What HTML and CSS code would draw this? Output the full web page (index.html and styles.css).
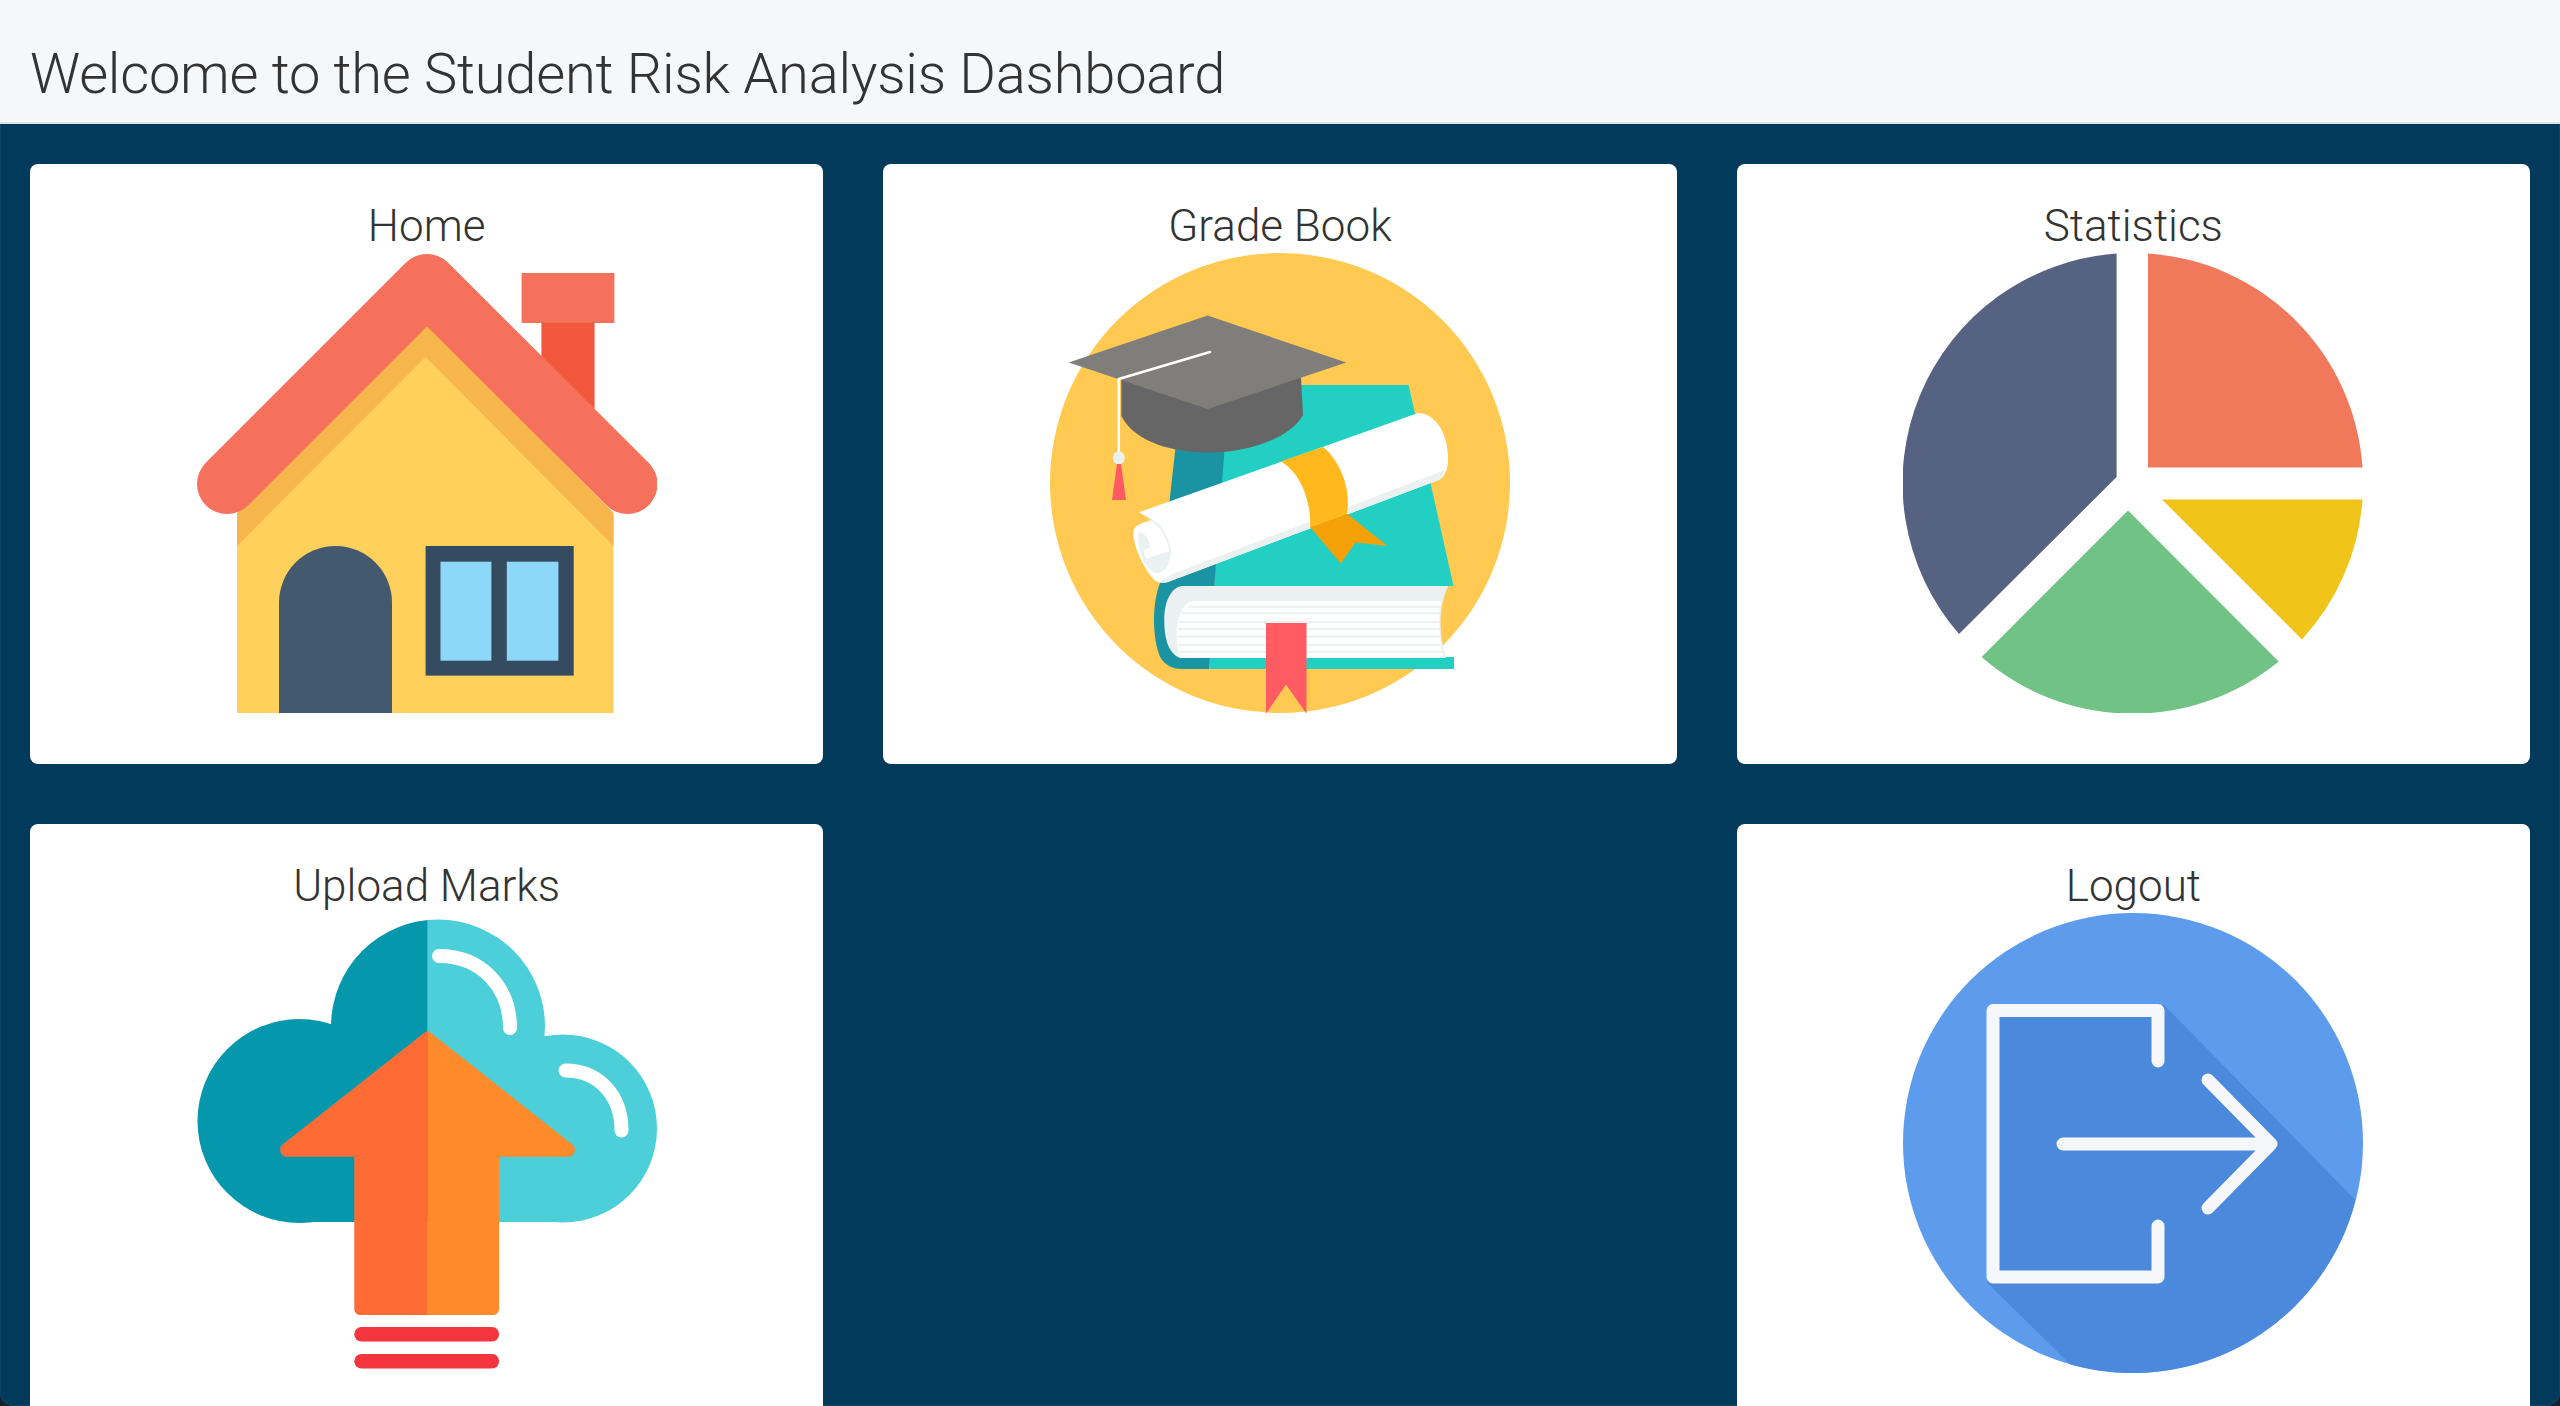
FILE: index.html
```html
<!DOCTYPE html>
<html lang="en">
<head>
<meta charset="utf-8">
<title>Student Risk Analysis Dashboard</title>
<link rel="stylesheet" href="styles.css">
</head>
<body>
<header class="topbar"><h1 class="topbar-title">Welcome to the Student Risk Analysis Dashboard</h1></header>
<main class="board">
  <a class="tile">
    <h2 class="tile-title">Home</h2>
    <svg class="tile-icon" viewBox="0 0 460 460">
      <rect x="344.400" y="60" width="53.200" height="130" fill="#f1583e"/>
      <rect x="324.600" y="20" width="92.800" height="50" fill="#f6715c"/>
      <polygon points="40,461 40,260 230,72 416.500,260 416.500,461" fill="#ffd05b"/>
      <polygon points="40,293 228.600,104 416.500,293 416.500,260 230,72 40,260" fill="#f7b64c"/>
      <polyline points="30,231 230,31 430.500,231" fill="none" stroke="#f6715c" stroke-width="60" stroke-linecap="round" stroke-linejoin="round"/>
      <path d="M82 461V349.500a56.500 56.500 0 0 1 113 0V461Z" fill="#435a6e"/>
      <rect x="228.600" y="293" width="148.100" height="129.600" fill="#344b60"/>
      <rect x="243.500" y="308.700" width="50.900" height="99" fill="#8dd7f9"/>
      <rect x="309.800" y="308.700" width="51.600" height="99" fill="#8dd7f9"/>
    </svg>
  </a>
  <a class="tile">
    <h2 class="tile-title">Grade Book</h2>
    <svg class="tile-icon" viewBox="0 0 460 460">
      <circle cx="230" cy="230" r="230" fill="#ffc952"/>
      <polygon points="240,132 358.600,132 403.500,333 164.300,333 172,190" fill="#21d0c3"/>
      <polygon points="126,190 175,190 164.300,333 110,333" fill="#1a93a2"/>
      <path d="M110 330C102 350 102 385 110 403.700C115 412 122 416 131.700 416H159.300L164.300 333V300Z" fill="#1a93a2"/>
      <rect x="160" y="404" width="244" height="12" fill="#21d0c3"/>
      <path d="M131.700 333H398.400C390 350 387 375 396 405H130C118 400 114.300 385 114.300 367C114.300 350 120 335 131.700 333Z" fill="#ebf0f1"/>
      <path d="M141.700 348H391C388 365 389 385 394 404.500H130C127 395 126.700 390 126.700 380C126.700 365 133 350 141.700 348Z" fill="#fff"/>
      <path d="M138 353.700H391M131.700 360.300H390M128.500 368.700H390M127 376H390M127 383.700H391M127.500 392H393M129 398.700H395" stroke="#ebf0f1" stroke-width="2"/>
      <path d="M216 370H256.500V460.700L236 431.400L216 460.700Z" fill="#ff5b62"/>
      <path d="M89 259.300L368 160C385 160 398 180 398 205C398 215 396 222 390 226.500L118 329C114 330 110 330 106.700 328.700C97 322 83.300 295 83.300 280C83.300 272 92 270 101.700 267Z" fill="#fff"/>
      <path d="M394.800 217C394 221 392 225 390 226.500L118 329C114 330 112 329.500 110 329C113 327 116 324 120 322Z" fill="#ebf0f1"/>
      <path d="M88.300 283C88 279 92 278 94 281C98 285 100 290 100 295L94 297C94 301 95 304 97 305.500L120 298C121 308 118 318 107 320C97 320 87 298 88.300 283Z" fill="#ebf0f1"/>
      <path d="M101 267C112 272 120 288 120.500 302" fill="none" stroke="#ebf0f1" stroke-width="2"/>
      <path d="M296.800 260.600L337.600 293L305.500 289.500L290.700 310.400L260 274Z" fill="#f4a107"/>
      <path d="M230.500 208.400L272.900 194C288 205 302 235 296.800 260.600L260 274C262 250 250 218 230.500 208.400Z" fill="#ffb91d"/>
      <path d="M71.300 126V163C85 190 125 199.500 157.600 199.500C200 199.500 240 185 253 162L251 125L157 100Z" fill="#666"/>
      <polygon points="157.600,62.500 296.300,109.500 157.600,156 18.800,109.500" fill="#807e7a"/>
      <polyline points="160,99 68.800,126 68.800,200" fill="none" stroke="#fff" stroke-width="2.500" stroke-linecap="round"/>
      <ellipse cx="68.800" cy="204.800" rx="6" ry="6.500" fill="#ebf0f1"/>
      <polygon points="67,211 71,211 76,247 62,247" fill="#ff5b62"/>
    </svg>
  </a>
  <a class="tile">
    <h2 class="tile-title">Statistics</h2>
    <svg class="tile-icon" viewBox="0 0 460 460">
      <path d="M213.600 0.600V224L56 381A230 230 0 0 1 213.600 0.600Z" fill="#566282"/>
      <path d="M245 0.500A230 230 0 0 1 459.500 214.400H245Z" fill="#f0795b"/>
      <path d="M259 246.500H459.500A230 230 0 0 1 399 386.400Z" fill="#f0c419"/>
      <path d="M225 257.400L375.700 408.500A230 230 0 0 1 78.600 404Z" fill="#71c285"/>
    </svg>
  </a>
  <a class="tile">
    <h2 class="tile-title">Upload Marks</h2>
    <svg class="tile-icon" viewBox="0 0 460 460">
      <clipPath id="cloudLeft"><rect x="0" y="0" width="230.800" height="460"/></clipPath>
      <clipPath id="cloudRight"><rect x="230.800" y="0" width="230" height="460"/></clipPath>
      <g clip-path="url(#cloudLeft)" fill="#0598ad">
        <circle cx="241" cy="113.500" r="107"/><circle cx="102.500" cy="208" r="102"/><rect x="102" y="140" width="264" height="169"/>
      </g>
      <g clip-path="url(#cloudRight)" fill="#4dcfd9">
        <circle cx="241" cy="113.500" r="107"/><circle cx="366" cy="215.500" r="94"/><rect x="102" y="140" width="264" height="169"/>
      </g>
      <path d="M242 43C285 43 313 75 313 115M368.500 157.600C402 157.600 424.500 183 424.500 217.500" fill="none" stroke="#fff" stroke-width="14" stroke-linecap="round"/>
      <path d="M230.800 117.800L227 120L85 232C81 237 84 243.800 90 243.800H157.300V396C157.300 399 160 402 163 402H230.800Z" fill="#ff6b35"/>
      <path d="M230.800 117.800L234 120L376 232C380 237 377 243.800 371 243.800H302.100V396C302.100 399 299 402 296 402H230.800Z" fill="#ff8b2a"/>
      <rect x="157.300" y="414" width="144.800" height="14.500" rx="7.200" fill="#f2353f"/>
      <rect x="157.300" y="441" width="144.800" height="14.500" rx="7.200" fill="#f2353f"/>
    </svg>
  </a>
  <div class="tile-slot" aria-hidden="true"></div>
  <a class="tile">
    <h2 class="tile-title">Logout</h2>
    <svg class="tile-icon" viewBox="0 0 460 460">
      <circle cx="230" cy="230" r="230" fill="#5d9cec"/>
      <path d="M261 92L452.400 287A230 230 0 0 1 167.400 451.500L84.400 370L90 97Z" fill="#4a89dc"/>
      <path d="M255 148V97.500H90V364H255V313" fill="none" stroke="#f5f7fa" stroke-width="13" stroke-linecap="round" stroke-linejoin="round"/>
      <path d="M160 231H368M305 167L368 231L305 295" fill="none" stroke="#f5f7fa" stroke-width="13" stroke-linecap="round" stroke-linejoin="round"/>
    </svg>
  </a>
</main>
</body>
</html>
```

FILE: styles.css
```css
html {
  margin: 0;
  height: 100%;
  overflow: hidden;
  background: #14222c;
}
body {
  margin: 0;
  height: 100%;
  overflow: hidden;
  display: flex;
  flex-direction: column;
  background: #013a5b;
  border-radius: 0 0 14px 14px;
  box-shadow: inset 0 0 0 1px #0d4666;
  color: #333;
  font-family: Roboto, "Liberation Sans", sans-serif;
}
.topbar {
  flex: none;
  height: 122px;
  background: #f6f7f9;
  border-bottom: 2px solid #dde3e3;
  display: flex;
  align-items: flex-end;
  padding: 0 30px;
}
.topbar-title {
  margin: 0 0 16px;
  font-size: 56px;
  line-height: 64px;
  font-weight: 300;
  letter-spacing: -0.22px;
  color: #333;
}
.board {
  flex: none;
  display: grid;
  grid-template-columns: repeat(3, 1fr);
  grid-auto-rows: 600px;
  column-gap: 60px;
  row-gap: 60px;
  padding: 40px 30px 0;
}
.tile {
  display: flex;
  flex-direction: column;
  align-items: center;
  background: #fff;
  border-radius: 8px;
}
.tile-title {
  margin: 37px 0 0;
  height: 52px;
  font-size: 44px;
  line-height: 50px;
  font-weight: 300;
  color: #333;
}
.tile-icon {
  width: 460px;
  height: 460px;
  flex: none;
}
```
